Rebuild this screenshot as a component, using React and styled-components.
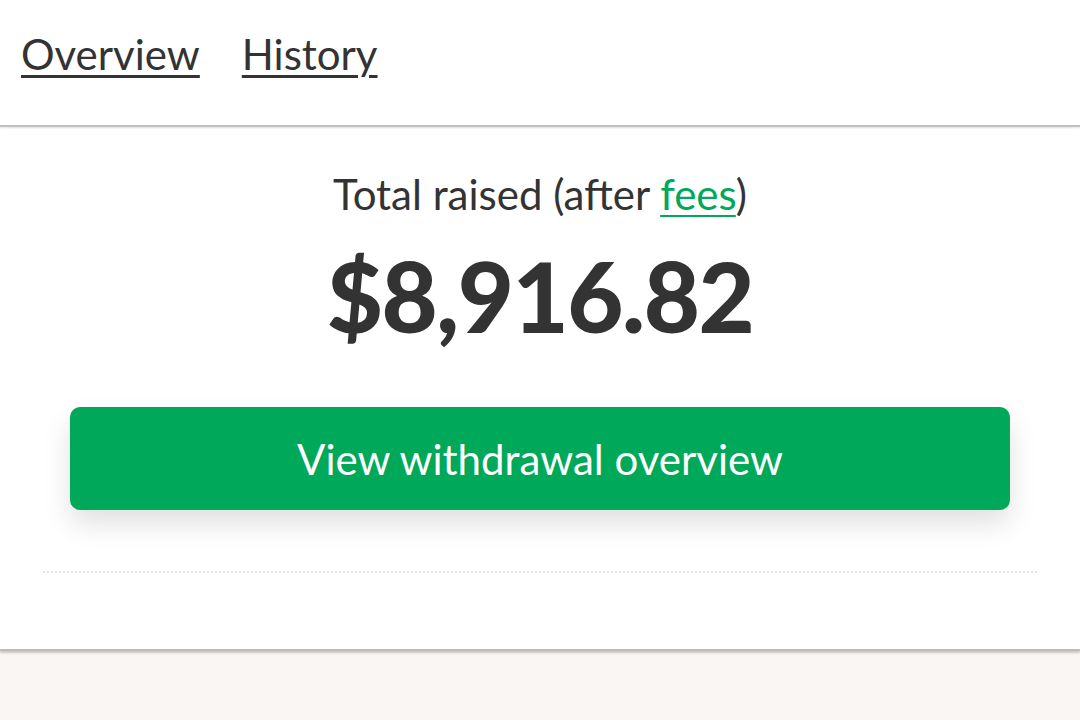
import React from 'react'
import styled, { createGlobalStyle } from 'styled-components'

const Global = createGlobalStyle`
  html, body {
    margin: 0;
    padding: 0;
    background: #faf6f3;
    font-family: Lato, "Noto Sans", sans-serif;
    color: #333333;
  }
`

const Page = styled.div`
  width: 1080px;
  min-height: 720px;
  background: #faf6f3;
`

const Card = styled.div`
  background: #ffffff;
  box-shadow: 0 2px 2px rgba(0, 0, 0, 0.2);
  border-bottom: 2px solid #bdbdbd;
`

const Tabs = styled.nav`
  height: 127px;
  display: flex;
  align-items: flex-start;
  gap: 42px;
  padding: 0 21px;
  box-sizing: border-box;
  border-bottom: 2px solid #c0c0c0;
  box-shadow: 0 1px 2px rgba(0, 0, 0, 0.12);
`

const Tab = styled.a`
  margin-top: 28px;
  font-size: 42px;
  line-height: 52px;
  color: #333333;
  text-decoration: underline;
  text-decoration-thickness: 3px;
  text-underline-offset: 5px;
`

const Summary = styled.section`
  display: flex;
  flex-direction: column;
  align-items: center;
  padding: 0 43px;
`

const Label = styled.div`
  margin-top: 41px;
  font-size: 42px;
  line-height: 52px;
`

const FeeLink = styled.a`
  color: #00a85a;
  text-decoration: underline;
  text-decoration-thickness: 2px;
  text-underline-offset: 5px;
`

const Amount = styled.div`
  margin-top: 18px;
  font-size: 97px;
  font-weight: 900;
  line-height: 116px;
  letter-spacing: -1.5px;
`

const Button = styled.button`
  margin-top: 53px;
  width: 940px;
  height: 103px;
  border: none;
  border-radius: 10px;
  background: #00a85a;
  color: #ffffff;
  font-family: Lato, "Noto Sans", sans-serif;
  font-size: 42px;
  box-shadow: 0 14px 28px rgba(0, 0, 0, 0.12);
  cursor: pointer;
`

const Divider = styled.hr`
  align-self: stretch;
  margin: 61px 0 76px;
  border: none;
  border-top: 2px dotted #e2e2e2;
`

export default function App() {
  return (
    <Page>
      <Global />
      <Card>
        <Tabs>
          <Tab>Overview</Tab>
          <Tab>History</Tab>
        </Tabs>
        <Summary>
          <Label>
            Total raised (after <FeeLink>fees</FeeLink>)
          </Label>
          <Amount>$8,916.82</Amount>
          <Button>View withdrawal overview</Button>
          <Divider />
        </Summary>
      </Card>
    </Page>
  )
}
